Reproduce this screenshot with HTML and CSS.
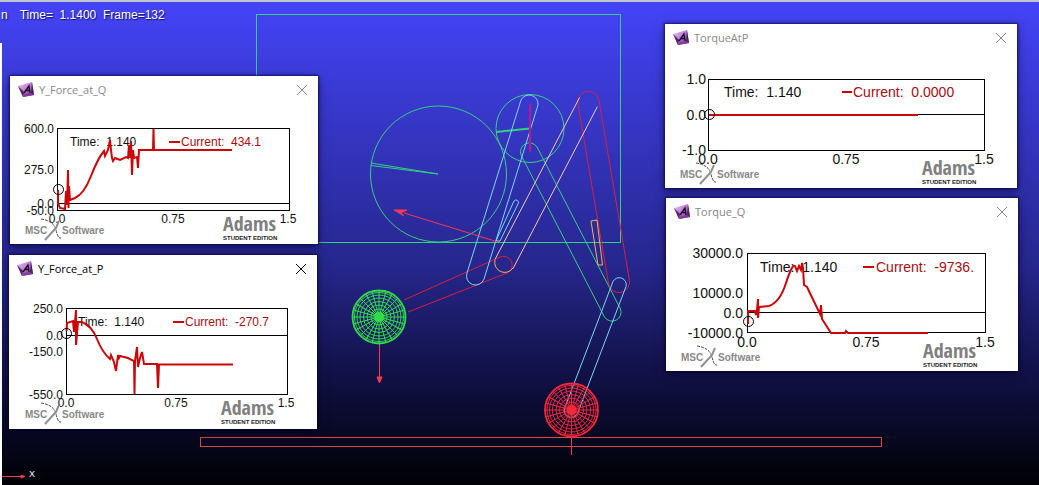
FILE: index.html
```html
<!DOCTYPE html>
<html lang="en">
<head>
<meta charset="utf-8">
<title>Adams animation</title>
<link rel="stylesheet" href="styles.css">
</head>
<body>
<svg class="defs" aria-hidden="true">
  <defs>
    <linearGradient id="gem" x1="0" y1="0" x2="1" y2="1">
      <stop offset="0" stop-color="#f0d4f6"/>
      <stop offset="0.5" stop-color="#b878cc"/>
      <stop offset="1" stop-color="#5a2078"/>
    </linearGradient>
    <symbol id="app-icon" viewBox="0 0 16 16">
      <path d="M0 4 14 0 16 13 5 15Z" fill="url(#gem)"/>
      <path d="M0 4 5 15 6 10Z" fill="#5c1c74"/>
      <path d="M5 15 16 13 14 11 7 12Z" fill="#7d3c98"/>
      <path d="M14 0 16 13 13 11Z" fill="#50206c"/>
      <path d="M6 11 11 4 12 11M8 8.500H12" fill="none" stroke="#180820" stroke-width="1.300"/>
    </symbol>
    <symbol id="close" viewBox="0 0 12 12">
      <path d="M1 1 11 11M11 1 1 11" fill="none" stroke="currentColor"/>
    </symbol>
    <symbol id="swoosh" viewBox="0 0 24 24">
      <path d="M2 2Q15 4 17 13T22 21" fill="none" stroke="#444" stroke-dasharray="3 1"/>
      <path d="M6 23 17 11 20 4" fill="none" stroke="#909090" stroke-width="2"/>
    </symbol>
    <symbol id="ball" viewBox="-28 -28 56 56">
      <g fill="none" stroke="currentColor">
        <circle r="26.500" stroke-width="1.800"/><circle r="24.500"/><circle r="22"/>
        <circle r="19"/><circle r="15.500"/><circle r="12"/><circle r="8"/>
        <g id="spokes"><path d="M0-27V27M-27 0H27M-19 19 19-19M-19-19 19 19"/></g>
        <use href="#spokes" transform="rotate(15)"/>
        <use href="#spokes" transform="rotate(30)"/>
      </g>
      <circle r="5" fill="currentColor"/>
    </symbol>
  </defs>
</svg>

<main class="viewport">
  <svg class="scene" role="img" aria-label="Linkage model">
    <g class="lines">
      <g class="green">
        <rect x="256.500" y="14.500" width="364" height="228"/>
        <circle cx="438.500" cy="174" r="68"/>
        <path d="M371 163 438 174 371 165.500"/>
        <circle cx="530" cy="128.500" r="34"/>
        <path d="M496 132 530 128.500" stroke-width="2"/>
        <path d="M537 147A9 9 0 0 0 521 155L604.500 317A9 9 0 0 0 620.500 309Z"/>
      </g>
      <g class="red">
        <path d="M598.900 100A10.500 10.500 0 0 0 578 104L608.600 284A10.500 10.500 0 0 0 629.400 280Z"/>
        <path d="M404 300 500 257A8.500 8.500 0 0 1 507 273L408 312"/>
      </g>
      <path class="cream" d="M597.400 106.600 513 268.600M579.600 97.400 495 259.400"/>
      <path class="orange" d="M495 260A10 10 0 0 0 513 268M591 221 597 220 602.500 265 598 265Z"/>
      <g class="cyan">
        <path d="M538 105A9 9 0 0 0 521 100L467 273A9 9 0 0 0 484 279Z"/>
        <path d="M518 204A2.500 2.500 0 0 0 514 201L496 241H500Z"/>
        <path d="M626 286.500A7 7 0 0 0 613 281.500L564.500 408.500A7 7 0 0 0 577.500 413.500Z"/>
      </g>
      <path class="magenta" d="M530 104V152"/>
      <path class="force" d="M498 242 404 213M394 210 407 210 401 213 404 216Z"/>
      <rect class="ground" x="200.500" y="437.500" width="681" height="9"/>
      <path class="force" d="M379.500 344V380M377 377H382L379.500 383Z"/>
      <path class="force" d="M571.500 437V455M2 476.500H24M21 475 25 476.500 21 478Z"/>
    </g>
    <use class="ball-green" href="#ball" x="351" y="289" width="56" height="56"/>
    <use class="ball-red" href="#ball" x="543.500" y="382" width="56" height="56"/>
    <text class="axis-name" x="29" y="477">X</text>
  </svg>
  <div class="topline"></div>
  <div class="side-panel"></div>
  <p class="status"><span>n</span><span>Time=  1.1400  Frame=132</span></p>

  <section class="window force-q">
    <header class="titlebar">
      <svg class="app"><use href="#app-icon"/></svg>
      <h2>Y_Force_at_Q</h2>
      <button class="close" aria-label="Close"><svg><use href="#close"/></svg></button>
    </header>
    <svg class="plot small" viewBox="10 104 308 140">
      <rect class="frame" x="57.500" y="128.500" width="232" height="82"/>
      <path class="frame" d="M57 203.500H290"/>
      <g class="end"><text x="54" y="133">600.0</text><text x="54" y="174">275.0</text><text x="54" y="208">0.0</text><text x="54" y="215">-50.0</text></g>
      <g class="mid"><text x="57" y="223">0.0</text><text x="173" y="223">0.75</text><text x="288" y="223">1.5</text></g>
      <text x="70" y="146">Time:  1.140</text>
      <text class="current" x="181" y="146">Current:  434.1</text>
      <path class="curve" d="M169 142H180M58 190V203L60 208 65 209 66 191 67 205 68 170 68.500 208 69 186 70 200 75 198Q84 194 91 176T104 151L105 156 108 150 110 140 111 150 112 158 113 161 115 158 120 160 126 157 128 158 129 145 130 158 131 141 132 175 133 150 134 158 137 157 138 168 139 150H153L153.500 129 154 150H232"/>
      <circle class="frame" cx="58.500" cy="189.500" r="5"/>
      <use href="#swoosh" x="39" y="217" width="24" height="24"/>
      <text class="msc" x="25" y="234">MSC</text><text class="msc" x="62" y="234">Software</text>
      <text class="adams" x="223" y="231">Adams</text><text class="edition" x="223" y="240">STUDENT EDITION</text>
    </svg>
  </section>

  <section class="window force-p active">
    <header class="titlebar">
      <svg class="app"><use href="#app-icon"/></svg>
      <h2>Y_Force_at_P</h2>
      <button class="close" aria-label="Close"><svg><use href="#close"/></svg></button>
    </header>
    <svg class="plot small" viewBox="9 283 308 146">
      <rect class="frame" x="66.500" y="308.500" width="221" height="86"/>
      <path class="frame" d="M66 335.500H288"/>
      <g class="end"><text x="63" y="313">250.0</text><text x="63" y="340">0.0</text><text x="63" y="356">-150.0</text><text x="63" y="399">-550.0</text></g>
      <g class="mid"><text x="66" y="407">0.0</text><text x="176" y="407">0.75</text><text x="286" y="407">1.5</text></g>
      <text x="78" y="326">Time:  1.140</text>
      <text class="current" x="185" y="326">Current:  -270.7</text>
      <path class="curve" d="M173 322H184M66.500 331 67 323 73 321 74 332 75 322 76 310V345L78 322 82 322Q92 326 97 339T110 359L111 355 114 362 116 371 118 355 119 358 120 356 128 358 134 361 134.500 394 135 361 137 347 138 367 140 358 142 352 144 364H157L158 388 159 364.500H233"/>
      <circle class="frame" cx="66.500" cy="333.500" r="5"/>
      <use href="#swoosh" x="39" y="401" width="24" height="24"/>
      <text class="msc" x="25" y="418">MSC</text><text class="msc" x="62" y="418">Software</text>
      <text class="adams" x="221" y="415">Adams</text><text class="edition" x="221" y="424">STUDENT EDITION</text>
    </svg>
  </section>

  <section class="window torque-p">
    <header class="titlebar">
      <svg class="app"><use href="#app-icon"/></svg>
      <h2>TorqueAtP</h2>
      <button class="close" aria-label="Close"><svg><use href="#close"/></svg></button>
    </header>
    <svg class="plot large" viewBox="665 52 352 136">
      <rect class="frame" x="708.500" y="79.500" width="276" height="71"/>
      <path class="frame" d="M708 114.500H985"/>
      <g class="end"><text x="706" y="84">1.0</text><text x="706" y="120">0.0</text><text x="706" y="155">-1.0</text></g>
      <g class="mid"><text x="708" y="164">0.0</text><text x="846" y="164">0.75</text><text x="984" y="164">1.5</text></g>
      <text x="724" y="97">Time:  1.140</text>
      <text class="current" x="853" y="97">Current:  0.0000</text>
      <path class="curve" d="M842 92H852M709 115H918"/>
      <circle class="frame" cx="709.500" cy="114.500" r="5"/>
      <use href="#swoosh" x="694" y="161" width="24" height="24"/>
      <text class="msc" x="680" y="178">MSC</text><text class="msc" x="717" y="178">Software</text>
      <text class="adams" x="922" y="175">Adams</text><text class="edition" x="922" y="184">STUDENT EDITION</text>
    </svg>
  </section>

  <section class="window torque-q">
    <header class="titlebar">
      <svg class="app"><use href="#app-icon"/></svg>
      <h2>Torque_Q</h2>
      <button class="close" aria-label="Close"><svg><use href="#close"/></svg></button>
    </header>
    <svg class="plot large" viewBox="666 226 352 145">
      <rect class="frame" x="747.500" y="253.500" width="238" height="79"/>
      <path class="frame" d="M747 312.500H986"/>
      <g class="end"><text x="743" y="258">30000.0</text><text x="743" y="298">10000.0</text><text x="743" y="318">0.0</text><text x="743" y="338">-10000.0</text></g>
      <g class="mid"><text x="747" y="347">0.0</text><text x="866" y="347">0.75</text><text x="985" y="347">1.5</text></g>
      <text x="760" y="272">Time:  1.140</text>
      <text class="current" x="876" y="272">Current:  -9736.</text>
      <path class="curve" d="M863 267H874M748 324V311H755L756 315 757 310 758 299V318L759 307 769 306Q780 302 786 283T795 266L797 271 799 266 801 270 802 263 803 268 804 285 807 287 820 314 821 305 822 319 831 333H845L846 331 848 333H928"/>
      <circle class="frame" cx="748.500" cy="321.500" r="5"/>
      <use href="#swoosh" x="695" y="344" width="24" height="24"/>
      <text class="msc" x="681" y="361">MSC</text><text class="msc" x="718" y="361">Software</text>
      <text class="adams" x="923" y="358">Adams</text><text class="edition" x="923" y="367">STUDENT EDITION</text>
    </svg>
  </section>
</main>
</body>
</html>
```
FILE: styles.css
```css
* { box-sizing: border-box; }
body { margin: 0; font-family: "Liberation Sans", Arial, sans-serif; }
.defs { position: absolute; width: 0; height: 0; }
.viewport {
  position: relative;
  min-height: 100vh;
  overflow: hidden;
  background: linear-gradient(#4444f8, #26268c 55%, #12124a 76%, #000004);
}
.scene { position: absolute; inset: 0; width: 100%; height: 100%; }
.lines { fill: none; stroke-width: 1; }
.green { stroke: #35cf80; }
.red { stroke: #d82040; }
.cream { stroke: #f2c8b0; }
.orange { stroke: #f0b060; }
.cyan { stroke: #78d8f4; }
.magenta { stroke: #b81890; stroke-width: 2; }
.force { stroke: #f83850; fill: #f83850; }
.ground { stroke: #d84848; }
.ball-green { color: #30dc48; }
.ball-red { color: #f02838; }
.axis-name { fill: #fff; font-size: 9px; }
.topline { position: absolute; top: 0; left: 0; right: 0; height: 2px; background: #c4c4cc; }
.side-panel { position: absolute; top: 43px; left: 0; bottom: 0; width: 2px; background: #fff; }
.status {
  position: relative;
  display: flex;
  gap: 12px;
  margin: 0;
  padding: 8px 1px;
  color: #fff;
  font-size: 12px;
  line-height: 14px;
  white-space: pre;
  text-shadow: 1px 1px 1px #10106a;
}
.window {
  position: absolute;
  background: #fff;
  color: #888;
  box-shadow: 0 0 2px 1px rgba(0, 0, 40, 0.6), 0 3px 10px rgba(0, 0, 40, 0.5);
}
.window.active { color: #000; }
.force-q { left: 10px; top: 76px; width: 308px; }
.force-p { left: 9px; top: 255px; width: 308px; }
.torque-p { left: 665px; top: 24px; width: 352px; }
.torque-q { left: 666px; top: 198px; width: 352px; }
.titlebar { display: flex; align-items: center; gap: 5px; height: 28px; padding: 0 10px 0 8px; }
.titlebar h2 { flex: 1; margin: 0; font: 400 11px/28px "Open Sans", "Noto Sans", sans-serif; }
.app { width: 16px; height: 16px; }
.close { display: flex; padding: 0; border: 0; background: none; color: inherit; }
.close svg { width: 12px; height: 12px; }
.plot { display: block; width: 100%; fill: #111; }
.plot text { white-space: pre; }
.small { font-size: 12px; }
.large { font-size: 14px; }
.frame { fill: none; stroke: #000; }
.end { text-anchor: end; }
.mid { text-anchor: middle; }
.plot .current { fill: #a80c10; }
.curve { fill: none; stroke: #cc0508; stroke-width: 2; }
.plot .msc { fill: #888; font-size: 10px; font-weight: 700; }
.plot .adams { fill: #808080; font-size: 20px; font-weight: 700; font-family: "Liberation Sans Narrow", "Open Sans Condensed", Lato, sans-serif; }
.plot .edition { fill: #222; font-size: 6px; font-weight: 700; }
```
